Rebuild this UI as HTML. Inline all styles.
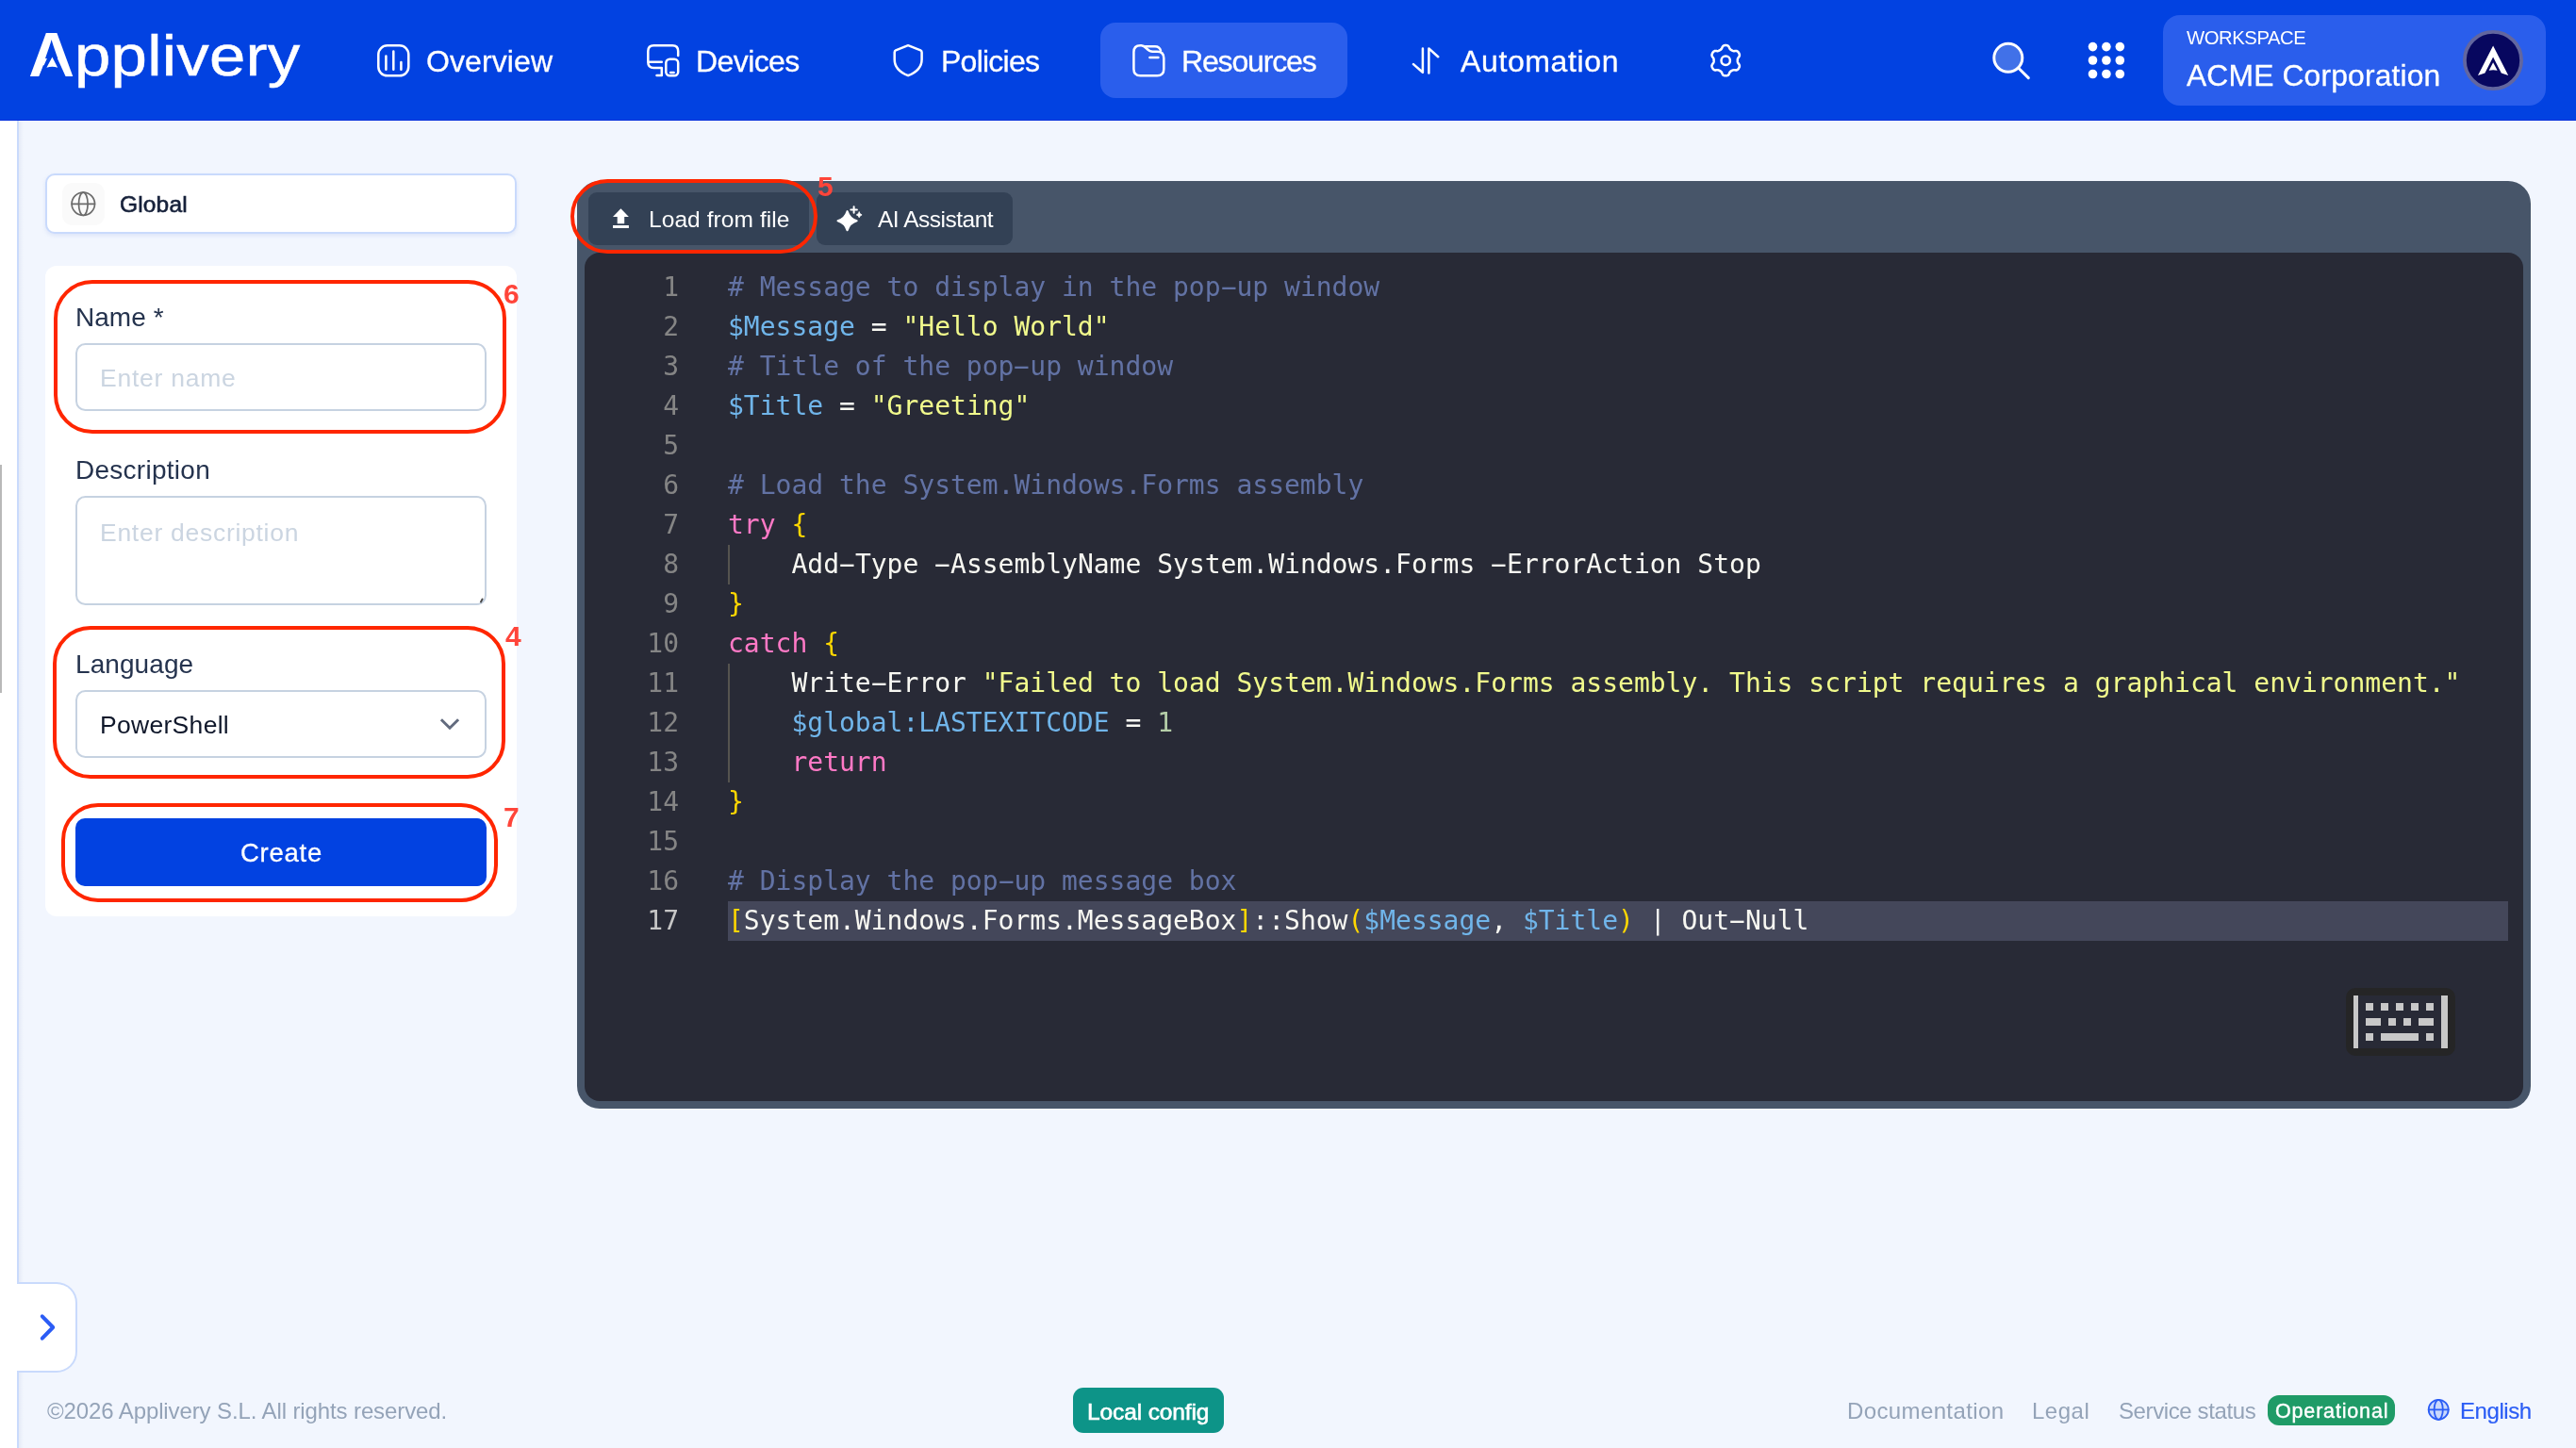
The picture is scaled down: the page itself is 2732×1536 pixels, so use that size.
<!DOCTYPE html>
<html lang="en">
<head>
<meta charset="utf-8">
<title>Applivery - Resources - Create script</title>
<style>
*{box-sizing:border-box;margin:0;padding:0}
html,body{width:2732px;height:1536px;overflow:hidden}
body{position:relative;background:#f2f6fe;font-family:"Liberation Sans",sans-serif;color:#1e293b}
.abs{position:absolute}
.t{position:absolute;white-space:nowrap;line-height:1;will-change:transform}
svg{position:absolute;overflow:visible}

/* ---------- header ---------- */
#hdr{left:0;top:0;width:2732px;height:128px;background:#0242e1;border-bottom:1px solid #002edc}
#hdrline{left:0;top:128px;width:2732px;height:1px;background:#fff}
#pill-res{left:1167px;top:24px;width:262px;height:80px;border-radius:16px;background:#2a5eec}
#pill-ws{left:2294px;top:15.5px;width:406.3px;height:96.5px;border-radius:18px;background:#2a5eec}

/* ---------- left rail ---------- */
#rail{left:0;top:128px;width:20px;height:1408px;background:#fff;border-right:2px solid #c9dafc}
#railshadow{left:20px;top:128px;width:5px;height:1408px;background:linear-gradient(90deg,rgba(150,165,200,.14),rgba(150,165,200,0))}
#railbar{left:0;top:493px;width:2px;height:242px;background:#b9b9b9}
#tab{left:18px;top:1360px;width:64px;height:96px;background:#fff;border:2px solid #c9dafc;border-left:none;border-radius:0 22px 22px 0}

/* ---------- left column ---------- */
#global{left:48px;top:184px;width:500px;height:64px;background:#fff;border:2px solid #c9dafc;border-radius:10px;box-shadow:0 2px 4px rgba(120,150,220,.18)}
#gicon{left:66px;top:194px;width:45px;height:45px;border-radius:11px;background:#fafafa}
#card{left:48px;top:282px;width:500px;height:690px;background:#fff;border-radius:12px}
.inp{position:absolute;left:80px;width:435.8px;background:#fff;border:2px solid #c6d2e1;border-radius:10.5px}
.red{position:absolute;border:4px solid #ff2600;background:transparent}
#create{left:80px;top:868px;width:436px;height:72px;border-radius:10px;background:#0242e1}

/* ---------- editor ---------- */
#edwrap{left:612px;top:192px;width:2072px;height:984px;border-radius:24px;background:#475569}
#edcode{left:620px;top:268px;width:2056px;height:900px;border-radius:16px;background:#282a36}
.tb{position:absolute;top:204px;height:56px;border-radius:9px;background:#334155}
#code{will-change:transform;left:620px;top:284px;width:2056px;font-family:"DejaVu Sans Mono","Liberation Mono",monospace;font-size:28px;line-height:42px;color:#f8f8f2;letter-spacing:0}
#code .ln{position:relative;height:42px;white-space:pre}
#code .n{position:absolute;left:0;top:0;width:100px;text-align:right;color:#858585}
#code .c{position:absolute;left:152px;top:0}
#code .hl{position:absolute;left:152px;top:0;width:1888px;height:42px;background:#44475a}
.k{color:#ff79c6}.s{color:#f1fa8c}.v{color:#70b5ea}.m{color:#6272a4}.b{color:#ffd700}.d{color:#b5cea8}
.h{display:inline-block;transform:scaleX(2)}
.guide{position:absolute;width:2px;background:#55534f}

/* ---------- footer ---------- */
#badge-local{left:1138px;top:1472px;width:160px;height:48px;border-radius:11px;background:#0d9488}
#badge-op{left:2404.8px;top:1479.7px;width:135.4px;height:32.3px;border-radius:12px;background:#1f9b67}
#logo{left:0;top:0;color:#fff}
#logoA{position:absolute;left:30.3px;top:23.8px;font-size:67.5px;font-weight:700;line-height:1}
#logoR{position:absolute;left:78.9px;top:28.4px;font-size:61.5px;line-height:1;letter-spacing:0.2px;-webkit-text-stroke:.5px #fff;transform:scaleX(1.121);transform-origin:0 0}
/* text placement (measured) */
#n-ov{left:452.3px;top:49px;font-size:32px;color:#fff;letter-spacing:0.09px;-webkit-text-stroke:0.3px #fff;}
#n-dev{left:738.1px;top:49px;font-size:32px;color:#fff;letter-spacing:-0.59px;-webkit-text-stroke:0.3px #fff;}
#n-pol{left:998.0px;top:49px;font-size:32px;color:#fff;letter-spacing:-0.75px;-webkit-text-stroke:0.3px #fff;}
#n-res{left:1253.3px;top:49px;font-size:32px;color:#fff;letter-spacing:-1.16px;-webkit-text-stroke:0.3px #fff;}
#n-aut{left:1548.5px;top:49px;font-size:32px;color:#fff;letter-spacing:0.62px;-webkit-text-stroke:0.3px #fff;}
#ws-l{left:2319.2px;top:30px;font-size:20.3px;color:#fff;letter-spacing:-0.44px;}
#ws-n{left:2319.2px;top:65px;font-size:31.8px;color:#fff;letter-spacing:0.16px;-webkit-text-stroke:0.3px #fff;}
#g-t{left:126.7px;top:205px;font-size:24.5px;color:#16213a;letter-spacing:0.16px;-webkit-text-stroke:0.6px #16213a;}
#l-name{left:79.9px;top:323px;font-size:28px;color:#25334e;letter-spacing:0.04px;}
#p-name{left:106.1px;top:388px;font-size:26.5px;color:#cbd5e1;letter-spacing:0.75px;}
#l-desc{left:79.9px;top:485px;font-size:28px;color:#25334e;letter-spacing:0.27px;}
#p-desc{left:106.1px;top:552px;font-size:26.5px;color:#cbd5e1;letter-spacing:0.72px;}
#l-lang{left:79.9px;top:691px;font-size:28px;color:#25334e;letter-spacing:0.08px;}
#v-lang{left:106.1px;top:756px;font-size:26.5px;color:#0f172a;letter-spacing:0.30px;}
#b-create{left:255.0px;top:891px;font-size:27.5px;color:#fff;letter-spacing:0.75px;-webkit-text-stroke:0.3px #fff;}
#r6{left:534.1px;top:297px;font-size:30px;color:#ff453a;font-weight:700;}
#r4{left:535.7px;top:660px;font-size:30px;color:#ff453a;font-weight:700;}
#r7{left:533.8px;top:852px;font-size:30px;color:#ff453a;font-weight:700;}
#r5{left:867.4px;top:183px;font-size:30px;color:#ff453a;font-weight:700;}
#tb-load{left:688.3px;top:221px;font-size:24.5px;color:#fff;letter-spacing:0.08px;}
#tb-ai{left:930.8px;top:221px;font-size:24.5px;color:#fff;letter-spacing:-0.49px;}
#f-copy{left:49.5px;top:1485px;font-size:24px;color:#94a3b8;letter-spacing:-0.11px;}
#f-local{left:1153.0px;top:1486px;font-size:24.5px;color:#fff;letter-spacing:-0.12px;-webkit-text-stroke:0.6px #fff;}
#f-doc{left:1958.6px;top:1485px;font-size:24px;color:#94a3b8;letter-spacing:0.38px;}
#f-legal{left:2154.8px;top:1485px;font-size:24px;color:#94a3b8;letter-spacing:0.50px;}
#f-svc{left:2246.6px;top:1485px;font-size:24px;color:#94a3b8;letter-spacing:-0.39px;}
#f-op{left:2413.2px;top:1487px;font-size:21.5px;color:#fff;letter-spacing:0.83px;-webkit-text-stroke:0.4px #fff;}
#f-en{left:2608.5px;top:1485px;font-size:24px;color:#2b5df5;letter-spacing:-0.43px;-webkit-text-stroke:0.2px #2b5df5;}
</style>
</head>
<body>

<header>
<div id="hdr" class="abs"></div>
<div id="hdrline" class="abs"></div>
<div id="logo" class="t"><span id="logoA">A</span><span id="logoR">pplivery</span></div>
<nav>
<div id="pill-res" class="abs"></div>
<a class="t" id="n-ov">Overview</a>
<a class="t" id="n-dev">Devices</a>
<a class="t" id="n-pol">Policies</a>
<a class="t" id="n-res">Resources</a>
<a class="t" id="n-aut">Automation</a>
</nav>
<div id="pill-ws" class="abs"></div>
<span class="t" id="ws-l">WORKSPACE</span>
<span class="t" id="ws-n">ACME Corporation</span>
<svg style="left:0;top:0" width="2732" height="128" viewBox="0 0 2732 128" fill="none" stroke="#fff" stroke-width="2.5" stroke-linecap="round" stroke-linejoin="round">
<!-- logo mark detail (over the real "A" text) -->
<path d="M55.4 50L69.8 81.5H41Z" fill="#0242e1" stroke="none"/>
<path d="M55.4 60.6L61.2 71.8Q55.4 69.6 49.4 71.8Z" fill="#fff" stroke="none"/>
<!-- overview -->
<rect x="401.3" y="48.3" width="32" height="32" rx="9.5"/>
<path d="M409.4 59.6V73.7M417.3 54.6V73.7M425.4 65.9V73.7"/>
<!-- devices -->
<path d="M719.2 59V54.2Q719.2 48.2 713.2 48.2H693.3Q687.3 48.2 687.3 54.2V66.1Q687.3 72.1 693.3 72.1H701.8V80H696.5M687.3 65.8H701.8"/>
<rect x="706.3" y="62.7" width="12.9" height="17.5" rx="4"/>
<path d="M711.2 76.9H714.6"/>
<!-- policies -->
<path d="M963.1 48.2L976.3 53.3Q977.6 53.9 977.6 55.4V63C977.6 71.5 971 77.2 963.1 80.2C955.2 77.2 948.7 71.5 948.7 63V55.4Q948.7 53.9 950 53.3Z"/>
<!-- resources -->
<path d="M1202.4 55.2Q1202.4 48.2 1209.4 48.2H1210.5C1215.5 48.2 1216 54.7 1222.5 54.7H1227.3Q1234.3 54.7 1234.3 61.7V73.2Q1234.3 80.2 1227.3 80.2H1209.4Q1202.4 80.2 1202.4 73.2Z"/>
<path d="M1214.8 49.2H1225Q1230 49.2 1231 53.8M1219.4 61H1228.4"/>
<!-- automation -->
<path d="M1508.9 51.4V76.8L1499 68.1M1515.4 77.4V51.4L1525.2 60.2"/>
<!-- settings -->
<path d="M1842.8 64.2 L1842.8 63.9 L1842.8 63.5 L1842.8 63.2 L1842.8 62.9 L1842.9 62.5 L1843.0 62.2 L1843.2 61.8 L1843.4 61.4 L1843.7 61.0 L1844.1 60.5 L1844.4 60.0 L1844.7 59.5 L1844.8 59.0 L1844.9 58.6 L1844.9 58.1 L1844.8 57.7 L1844.7 57.3 L1844.5 56.9 L1844.3 56.5 L1844.1 56.2 L1843.9 55.8 L1843.7 55.4 L1843.4 55.1 L1843.1 54.8 L1842.8 54.5 L1842.4 54.3 L1842.0 54.1 L1841.5 54.0 L1840.9 54.0 L1840.3 54.1 L1839.8 54.1 L1839.2 54.2 L1838.8 54.2 L1838.4 54.1 L1838.0 54.0 L1837.7 53.9 L1837.4 53.8 L1837.1 53.6 L1836.8 53.5 L1836.5 53.3 L1836.2 53.1 L1835.9 53.0 L1835.6 52.8 L1835.4 52.6 L1835.1 52.4 L1834.8 52.1 L1834.6 51.8 L1834.4 51.4 L1834.1 50.9 L1833.9 50.3 L1833.7 49.8 L1833.4 49.3 L1833.0 48.9 L1832.7 48.6 L1832.3 48.4 L1831.9 48.3 L1831.5 48.2 L1831.0 48.1 L1830.6 48.1 L1830.2 48.1 L1829.8 48.1 L1829.4 48.1 L1828.9 48.2 L1828.5 48.3 L1828.1 48.4 L1827.7 48.6 L1827.4 48.9 L1827.0 49.3 L1826.7 49.8 L1826.5 50.3 L1826.3 50.9 L1826.0 51.4 L1825.8 51.8 L1825.6 52.1 L1825.3 52.4 L1825.0 52.6 L1824.8 52.8 L1824.5 53.0 L1824.2 53.1 L1823.9 53.3 L1823.6 53.5 L1823.3 53.6 L1823.0 53.8 L1822.7 53.9 L1822.4 54.0 L1822.0 54.1 L1821.6 54.2 L1821.2 54.2 L1820.6 54.1 L1820.1 54.1 L1819.5 54.0 L1818.9 54.0 L1818.4 54.1 L1818.0 54.3 L1817.6 54.5 L1817.3 54.8 L1817.0 55.1 L1816.7 55.4 L1816.5 55.8 L1816.3 56.2 L1816.1 56.5 L1815.9 56.9 L1815.7 57.3 L1815.6 57.7 L1815.5 58.1 L1815.5 58.6 L1815.6 59.0 L1815.7 59.5 L1816.0 60.0 L1816.3 60.5 L1816.7 61.0 L1817.0 61.4 L1817.2 61.8 L1817.4 62.2 L1817.5 62.5 L1817.6 62.9 L1817.6 63.2 L1817.6 63.5 L1817.6 63.9 L1817.6 64.2 L1817.6 64.5 L1817.6 64.9 L1817.6 65.2 L1817.6 65.5 L1817.5 65.9 L1817.4 66.2 L1817.2 66.6 L1817.0 67.0 L1816.7 67.4 L1816.3 67.9 L1816.0 68.4 L1815.7 68.9 L1815.6 69.4 L1815.5 69.8 L1815.5 70.3 L1815.6 70.7 L1815.7 71.1 L1815.9 71.5 L1816.1 71.9 L1816.3 72.2 L1816.5 72.6 L1816.7 73.0 L1817.0 73.3 L1817.3 73.6 L1817.6 73.9 L1818.0 74.1 L1818.4 74.3 L1818.9 74.4 L1819.5 74.4 L1820.1 74.3 L1820.6 74.3 L1821.2 74.2 L1821.6 74.2 L1822.0 74.3 L1822.4 74.4 L1822.7 74.5 L1823.0 74.6 L1823.3 74.8 L1823.6 74.9 L1823.9 75.1 L1824.2 75.3 L1824.5 75.4 L1824.8 75.6 L1825.0 75.8 L1825.3 76.0 L1825.6 76.3 L1825.8 76.6 L1826.0 77.0 L1826.3 77.5 L1826.5 78.1 L1826.7 78.6 L1827.0 79.1 L1827.4 79.5 L1827.7 79.8 L1828.1 80.0 L1828.5 80.1 L1828.9 80.2 L1829.4 80.3 L1829.8 80.3 L1830.2 80.3 L1830.6 80.3 L1831.0 80.3 L1831.5 80.2 L1831.9 80.1 L1832.3 80.0 L1832.7 79.8 L1833.0 79.5 L1833.4 79.1 L1833.7 78.6 L1833.9 78.1 L1834.1 77.5 L1834.4 77.0 L1834.6 76.6 L1834.8 76.3 L1835.1 76.0 L1835.4 75.8 L1835.6 75.6 L1835.9 75.4 L1836.2 75.3 L1836.5 75.1 L1836.8 74.9 L1837.1 74.8 L1837.4 74.6 L1837.7 74.5 L1838.0 74.4 L1838.4 74.3 L1838.8 74.2 L1839.2 74.2 L1839.8 74.3 L1840.3 74.3 L1840.9 74.4 L1841.5 74.4 L1842.0 74.3 L1842.4 74.1 L1842.8 73.9 L1843.1 73.6 L1843.4 73.3 L1843.7 73.0 L1843.9 72.6 L1844.1 72.2 L1844.3 71.9 L1844.5 71.5 L1844.7 71.1 L1844.8 70.7 L1844.9 70.3 L1844.9 69.8 L1844.8 69.4 L1844.7 68.9 L1844.4 68.4 L1844.1 67.9 L1843.7 67.4 L1843.4 67.0 L1843.2 66.6 L1843.0 66.2 L1842.9 65.9 L1842.8 65.5 L1842.8 65.2 L1842.8 64.9 L1842.8 64.5Z"/>
<circle cx="1830.2" cy="64.2" r="4.7"/>
<!-- search -->
<circle cx="2129.8" cy="61.3" r="15" fill="rgba(255,255,255,.25)" stroke-width="3"/>
<path d="M2140.8 72.3L2151.3 82.6" stroke-width="3"/>
<!-- apps grid -->
<g fill="#fff" stroke="none">
<circle cx="2219.5" cy="49.6" r="4.8"/><circle cx="2233.9" cy="49.6" r="4.8"/><circle cx="2248.3" cy="49.6" r="4.8"/>
<circle cx="2219.5" cy="64" r="4.8"/><circle cx="2233.9" cy="64" r="4.8"/><circle cx="2248.3" cy="64" r="4.8"/>
<circle cx="2219.5" cy="78.5" r="4.8"/><circle cx="2233.9" cy="78.5" r="4.8"/><circle cx="2248.3" cy="78.5" r="4.8"/>
</g>
<!-- avatar -->
<circle cx="2644" cy="64" r="30.1" fill="#07075f" stroke="#62669f" stroke-width="3.8"/>
<path d="M2644.1 48.6L2660.2 80L2652.8 77.6L2644.1 60.4L2635.4 77.6L2628 80Z" fill="#fff" stroke="none"/>
<path d="M2644.1 66.3L2648.6 74.8Q2644.1 73.5 2639.7 74.8Z" fill="#fff" stroke="none"/>
</svg>
</header>

<aside>
<div id="rail" class="abs"></div>
<div id="railshadow" class="abs"></div>
<div id="railbar" class="abs"></div>
<div id="tab" class="abs"></div>
<svg style="left:0;top:128px" width="2732" height="1408" viewBox="0 128 2732 1408" fill="none" stroke-linecap="round" stroke-linejoin="round">
<path d="M44.8 1396.3L56.2 1408L44.8 1419.7" stroke="#2b5cf5" stroke-width="4"/>
</svg>
</aside>

<main>
<section>
<div id="global" class="abs"></div>
<div id="gicon" class="abs"></div>
<svg style="left:0;top:128px" width="2732" height="1408" viewBox="0 128 2732 1408" fill="none" stroke-linecap="round" stroke-linejoin="round">
<g stroke="#6b6b6b" stroke-width="1.7"><circle cx="88.3" cy="216.3" r="12.2"/><ellipse cx="88.3" cy="216.3" rx="4.8" ry="12.2"/><path d="M76.1 216.3H100.5"/></g>
</svg>
<span class="t" id="g-t">Global</span>
</section>

<form>
<div id="card" class="abs"></div>
<label class="t" id="l-name">Name *</label>
<div class="inp" style="top:364.3px;height:71.4px"></div>
<span class="t" id="p-name">Enter name</span>
<label class="t" id="l-desc">Description</label>
<div class="inp" style="top:526.3px;height:115.4px"></div>
<span class="t" id="p-desc">Enter description</span>
<svg style="left:504px;top:631px" width="10" height="10" viewBox="0 0 10 10"><path d="M7.6 4.6 L6 7.4" stroke="#4a4a4a" stroke-width="2" stroke-linecap="round" fill="none"/></svg>
<label class="t" id="l-lang">Language</label>
<div class="inp" style="top:732.2px;height:71.5px"></div>
<span class="t" id="v-lang">PowerShell</span>
<svg style="left:466px;top:761px" width="22" height="14" viewBox="0 0 22 14"><path d="M1.9 2.3 L11 11.2 L20.1 2.3" fill="none" stroke="#626b7e" stroke-width="3"/></svg>
<div id="create" class="abs"></div>
<span class="t" id="b-create">Create</span>
</form>

<section>
<div id="edwrap" class="abs"></div>
<div id="edcode" class="abs"></div>
<div class="tb" style="left:624px;width:234px"></div>
<svg style="left:0;top:128px" width="2732" height="1408" viewBox="0 128 2732 1408" fill="none" stroke-linecap="round" stroke-linejoin="round">
<path d="M658.4 221.3L666.9 229.9H662.2V237.2H654.7V229.9H650Z M650 239H666.9V241.9H650Z" fill="#fff"/>
</svg>
<span class="t" id="tb-load">Load from file</span>
<div class="tb" style="left:866px;width:208px"></div>
<svg style="left:0;top:128px" width="2732" height="1408" viewBox="0 128 2732 1408" fill="none" stroke-linecap="round" stroke-linejoin="round">
<path d="M898.6 224.2 Q900.9 231.9 908.6 234.2 Q900.9 236.5 898.6 244.2 Q896.3 236.5 888.6 234.2 Q896.3 231.9 898.6 224.2Z" fill="#fff" stroke="#fff" stroke-width="2.2"/>
<path d="M905.6 219.2V225.8M902.3 222.5H908.9" stroke="#fff" stroke-width="2"/>
<path d="M911.2 225.0 Q911.8 227.3 914.1 227.9 Q911.8 228.5 911.2 230.8 Q910.6 228.5 908.3 227.9 Q910.6 227.3 911.2 225.0Z" fill="#fff" stroke="#fff" stroke-width=".8"/>
</svg>
<span class="t" id="tb-ai">AI Assistant</span>
<div id="code" class="abs">
<div class="ln"><span class="n">1</span><span class="c"><span class="m"># Message to display in the pop<span class="h">-</span>up window</span></span></div>
<div class="ln"><span class="n">2</span><span class="c"><span class="v">$Message</span> = <span class="s">"Hello World"</span></span></div>
<div class="ln"><span class="n">3</span><span class="c"><span class="m"># Title of the pop<span class="h">-</span>up window</span></span></div>
<div class="ln"><span class="n">4</span><span class="c"><span class="v">$Title</span> = <span class="s">"Greeting"</span></span></div>
<div class="ln"><span class="n">5</span><span class="c"></span></div>
<div class="ln"><span class="n">6</span><span class="c"><span class="m"># Load the System.Windows.Forms assembly</span></span></div>
<div class="ln"><span class="n">7</span><span class="c"><span class="k">try</span> <span class="b">{</span></span></div>
<div class="ln"><span class="n">8</span><span class="c">    Add<span class="h">-</span>Type <span class="h">-</span>AssemblyName System.Windows.Forms <span class="h">-</span>ErrorAction Stop</span></div>
<div class="ln"><span class="n">9</span><span class="c"><span class="b">}</span></span></div>
<div class="ln"><span class="n">10</span><span class="c"><span class="k">catch</span> <span class="b">{</span></span></div>
<div class="ln"><span class="n">11</span><span class="c">    Write<span class="h">-</span>Error <span class="s">"Failed to load System.Windows.Forms assembly. This script requires a graphical environment."</span></span></div>
<div class="ln"><span class="n">12</span><span class="c">    <span class="v">$global:LASTEXITCODE</span> = <span class="d">1</span></span></div>
<div class="ln"><span class="n">13</span><span class="c">    <span class="k">return</span></span></div>
<div class="ln"><span class="n">14</span><span class="c"><span class="b">}</span></span></div>
<div class="ln"><span class="n">15</span><span class="c"></span></div>
<div class="ln"><span class="n">16</span><span class="c"><span class="m"># Display the pop<span class="h">-</span>up message box</span></span></div>
<div class="ln"><div class="hl"></div><span class="n" style="color:#c6c6c6">17</span><span class="c"><span class="b">[</span>System.Windows.Forms.MessageBox<span class="b">]</span>::Show<span class="b">(</span><span class="v">$Message</span>, <span class="v">$Title</span><span class="b">)</span> | Out<span class="h">-</span>Null</span></div>
</div>
<div class="guide" style="left:772px;top:578px;height:42px"></div>
<div class="guide" style="left:772px;top:704px;height:126px"></div>
<!-- keyboard widget -->
<div class="abs" style="left:2488px;top:1048px;width:116px;height:72px;border-radius:10px;border:8px solid #252526"></div>
<svg style="left:2496px;top:1056px" width="100" height="56" viewBox="0 0 100 56" fill="#c8c8c8">
<rect x="0" y="0" width="5" height="56"/><rect x="93" y="0" width="7" height="56"/>
<rect x="13" y="8" width="8" height="8"/><rect x="29" y="8" width="8" height="8"/><rect x="45" y="8" width="8" height="8"/><rect x="61" y="8" width="8" height="8"/><rect x="77" y="8" width="8" height="8"/>
<rect x="13" y="24" width="16" height="8"/><rect x="37" y="24" width="8" height="8"/><rect x="53" y="24" width="8" height="8"/><rect x="69" y="24" width="16" height="8"/>
<rect x="13" y="40" width="8" height="8"/><rect x="29" y="40" width="40" height="8"/><rect x="77" y="40" width="8" height="8"/>
</svg>
</section>

<!-- tutorial annotations (numbered callouts) -->
<div class="red" style="left:56.6px;top:296.8px;width:480.5px;height:163.1px;border-radius:41px"></div>
<span class="t" id="r6">6</span>
<div class="red" style="left:56.3px;top:663.8px;width:479.9px;height:162px;border-radius:40px"></div>
<span class="t" id="r4">4</span>
<div class="red" style="left:64.7px;top:851.9px;width:463px;height:105.2px;border-radius:39px"></div>
<span class="t" id="r7">7</span>
<div class="red" style="left:605.3px;top:190px;width:261.5px;height:78.6px;border-radius:39.3px"></div>
<span class="t" id="r5">5</span>
</main>

<footer>
<span class="t" id="f-copy">©2026 Applivery S.L. All rights reserved.</span>
<div id="badge-local" class="abs"></div>
<span class="t" id="f-local">Local config</span>
<a class="t" id="f-doc">Documentation</a>
<a class="t" id="f-legal">Legal</a>
<a class="t" id="f-svc">Service status</a>
<div id="badge-op" class="abs"></div>
<span class="t" id="f-op">Operational</span>
<svg style="left:0;top:128px" width="2732" height="1408" viewBox="0 128 2732 1408" fill="none" stroke-linecap="round" stroke-linejoin="round">
<g stroke="#2b5df5" stroke-width="1.8"><circle cx="2586.2" cy="1495.3" r="10.5" fill="#c9d8fc"/><ellipse cx="2586.2" cy="1495.3" rx="4.6" ry="10.5"/><path d="M2575.7 1495.3H2596.7"/></g>
</svg>
<span class="t" id="f-en">English</span>
</footer>

</body>
</html>
